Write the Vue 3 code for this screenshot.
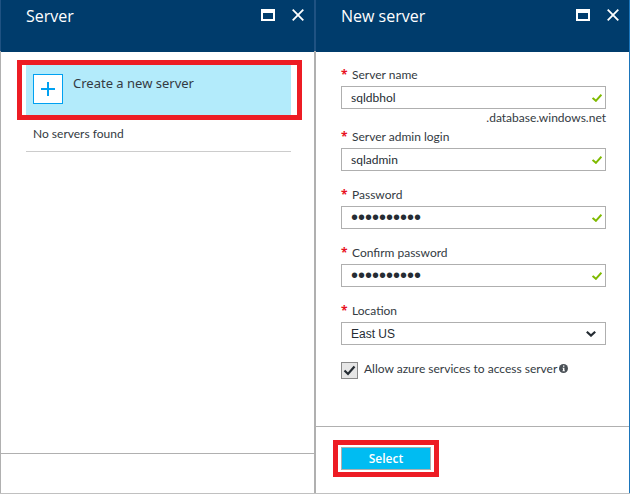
<script setup>
import { ref } from 'vue'

const fields = ref([
  { id: 'server-name', label: 'Server name', type: 'text', value: 'sqldbhol', suffix: '.database.windows.net' },
  { id: 'admin-login', label: 'Server admin login', type: 'text', value: 'sqladmin' },
  { id: 'password', label: 'Password', type: 'password', value: 'xxxxxxxxxx' },
  { id: 'confirm-password', label: 'Confirm password', type: 'password', value: 'xxxxxxxxxx' }
])
const location = ref('East US')
const allowAzure = ref(true)
</script>

<template>
  <main class="shell">
    <section class="blade">
      <header class="blade-header">
        <h1>Server</h1>
        <div class="window-actions">
          <button type="button" aria-label="Maximize">
            <svg width="14" height="12" viewBox="0 0 14 12"><path fill="#fff" fill-rule="evenodd" d="M0 0h14v12H0zM2 4v6h10V4z" /></svg>
          </button>
          <button type="button" aria-label="Close">
            <svg width="12" height="12" viewBox="0 0 12 12"><path d="M.7.7l10.6 10.6M11.3.7L.7 11.3" stroke="#fff" stroke-width="1.8" /></svg>
          </button>
        </div>
      </header>
      <div class="server-list">
        <div class="highlight create-highlight">
          <button type="button" class="create">
            <span class="plus">
              <svg width="14" height="14" viewBox="0 0 14 14"><path d="M7 0v14M0 7h14" stroke="#00a1f1" stroke-width="2" /></svg>
            </span>
            <span class="create-text">Create a new server</span>
          </button>
        </div>
        <p class="empty">No servers found</p>
      </div>
      <footer class="server-footer"></footer>
    </section>

    <section class="blade new-blade">
      <header class="blade-header">
        <h1>New server</h1>
        <div class="window-actions">
          <button type="button" aria-label="Maximize">
            <svg width="14" height="12" viewBox="0 0 14 12"><path fill="#fff" fill-rule="evenodd" d="M0 0h14v12H0zM2 4v6h10V4z" /></svg>
          </button>
          <button type="button" aria-label="Close">
            <svg width="12" height="12" viewBox="0 0 12 12"><path d="M.7.7l10.6 10.6M11.3.7L.7 11.3" stroke="#fff" stroke-width="1.8" /></svg>
          </button>
        </div>
      </header>
      <form class="form" @submit.prevent>
        <div v-for="field in fields" :key="field.id" class="field" :class="{ suffixed: field.suffix }">
          <label :for="field.id"><span class="required">*</span>{{ field.label }}</label>
          <div class="control">
            <input :id="field.id" v-model="field.value" :type="field.type" autocomplete="off" />
            <svg class="valid" width="10" height="8" viewBox="0 0 10 8"><path d="M.6 3.9L3.9 6.8L9.4.7" fill="none" stroke="#7fba00" stroke-width="2" /></svg>
          </div>
          <span v-if="field.suffix" class="suffix">{{ field.suffix }}</span>
        </div>
        <div class="field">
          <label for="location"><span class="required">*</span>Location</label>
          <div class="control">
            <select id="location" v-model="location">
              <option>East US</option>
            </select>
            <svg class="chevron" width="10" height="6" viewBox="0 0 10 6"><path d="M.8.8L5 4.6L9.2.8" fill="none" stroke="#252c33" stroke-width="2.2" /></svg>
          </div>
        </div>
        <div class="check-row">
          <input id="allow" v-model="allowAzure" type="checkbox" />
          <label for="allow">Allow azure services to access server</label>
          <svg class="info" width="9" height="9" viewBox="0 0 9 9"><circle cx="4.5" cy="4.5" r="4.5" fill="#4a5056" /><path d="M4 1.5h1.4v1.3H4zM3.5 3.7h1.9v2.8H6v.8H3.4v-.8H4V4.5h-.5z" fill="#fff" /></svg>
        </div>
      </form>
      <footer class="form-footer">
        <div class="highlight select-highlight">
          <button type="button" class="select-button">Select</button>
        </div>
      </footer>
    </section>
  </main>
</template>

<style>
body {
  margin: 0;
  background: #fff;
}
</style>

<style scoped>
* {
  box-sizing: border-box;
}

.shell {
  display: grid;
  grid-template-columns: 1fr 1fr;
  min-height: 100vh;
  border-bottom: 1px solid #c0c0c0;
  font-family: Lato, "Noto Sans", sans-serif;
  font-size: 12px;
  line-height: 16px;
  color: #333a42;
}

button,
input,
select {
  margin: 0;
  font: inherit;
  color: inherit;
}

.blade {
  display: flex;
  flex-direction: column;
  min-width: 0;
  border-left: 1px solid #b0b0b0;
  border-right: 1px solid #b0b0b0;
  border-image: linear-gradient(#1f5282 52px, #b0b0b0 52px) 1;
  border-top: 0;
  border-bottom: 0;
}

.new-blade {
  position: relative;
}

.new-blade::after {
  content: "";
  position: absolute;
  top: 0;
  bottom: 0;
  right: -1px;
  width: 1px;
  background: #1b75bb;
}

.blade-header {
  display: flex;
  justify-content: space-between;
  height: 52px;
  padding: 4px 10px 0 25px;
  background: #003c6c;
  color: #fff;
}

h1 {
  margin: 0;
  font-family: "Open Sans", "Noto Sans", sans-serif;
  font-size: 16px;
  line-height: 24px;
  font-weight: 400;
}

.window-actions {
  display: flex;
  gap: 17px;
  padding-top: 5px;
  align-items: flex-start;
}

.window-actions button {
  display: block;
  padding: 0;
  border: 0;
  background: none;
  line-height: 0;
}

svg {
  display: block;
  flex: none;
}

.server-list {
  flex: 1;
  padding: 8px 12px 0 16px;
}

.highlight {
  border: 5px solid #ed1c24;
}

.create-highlight {
  padding: 0 6px 0 4px;
}

.create {
  display: flex;
  width: 100%;
  height: 50px;
  padding: 9px 7px 0;
  gap: 10px;
  align-items: flex-start;
  border: 0;
  background: #b3ebfb;
  text-align: left;
}

.plus {
  display: flex;
  align-items: center;
  justify-content: center;
  width: 30px;
  height: 30px;
  border: 1px solid #00a1f1;
  background: #fff;
}

.create-text {
  font-family: "Noto Sans", "Open Sans", sans-serif;
  font-size: 13px;
  line-height: 18px;
}

.empty {
  margin: 0 11px 0 9px;
  padding: 6px 7px 9px;
  border-bottom: 1px solid #ccc;
}

.server-footer {
  height: 40px;
  border-top: 1px solid #b0b0b0;
}

.form {
  flex: 1;
  padding: 15px 23px 0 25px;
}

.field {
  margin-bottom: 16px;
}

.field label {
  display: flex;
  height: 19px;
  padding-bottom: 3px;
}

.required {
  width: 11px;
  font-family: "Open Sans", "Noto Sans", sans-serif;
  color: #e81123;
  font-weight: 700;
}

.control {
  position: relative;
}

.control input,
.control select {
  display: block;
  width: 100%;
  height: 23px;
  padding: 0 24px 0 9px;
  border: 1px solid #afafaf;
  border-radius: 0;
  outline: 0;
  background: #fff;
  appearance: none;
  color: #252c33;
}

.control input[type="password"] {
  font-family: "Liberation Sans", Arial, sans-serif;
  font-size: 20px;
}

.control select {
  font-family: "Liberation Sans", Arial, sans-serif;
}

.valid {
  position: absolute;
  top: 8px;
  right: 4px;
}

.chevron {
  position: absolute;
  top: 9px;
  right: 10px;
}

.suffixed {
  margin-bottom: 3px;
}

.suffix {
  display: block;
  padding-top: 1px;
  text-align: right;
}

.check-row {
  display: flex;
  align-items: flex-start;
}

.check-row input {
  flex: none;
  width: 17px;
  height: 17px;
  margin: 1px 6px 0 0;
  border: 1px solid #8a8a8a;
  appearance: none;
  background: #e6e6e6;
}

.check-row input:checked {
  background: #e6e6e6 url("data:image/svg+xml,%3Csvg xmlns='http://www.w3.org/2000/svg' viewBox='0 0 15 15'%3E%3Cpath d='M2.5 7.5L6 11L12.5 3.5' fill='none' stroke='%23252c33' stroke-width='2.2'/%3E%3C/svg%3E");
}

.check-row label {
  white-space: nowrap;
}

.info {
  margin: 3px 0 0 2px;
}

.form-footer {
  height: 67px;
  padding: 13px 17px 0;
  border-top: 1px solid #b0b0b0;
}

.select-highlight {
  width: fit-content;
  padding: 2px 3px;
}

.select-button {
  display: block;
  width: 90px;
  height: 23px;
  padding: 0;
  border: 1px solid #afafaf;
  background: #00bcf2;
  color: #fff;
  font-family: "Open Sans", "Noto Sans", sans-serif;
  font-weight: 600;
}
</style>
